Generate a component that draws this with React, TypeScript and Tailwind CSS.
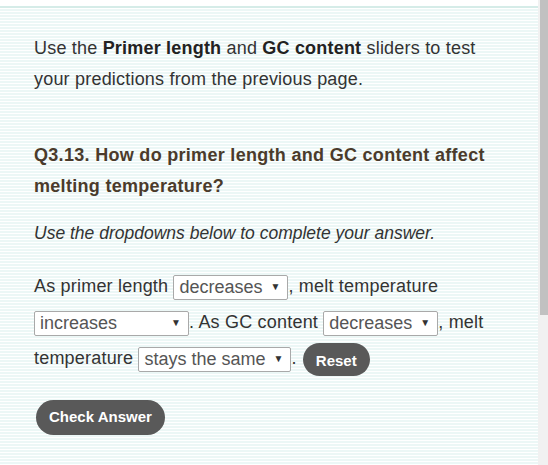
import React from 'react';

// ─── 下拉選單（外觀仿原生 select） ──────────────────────────

interface FakeSelectProps {
    value: string;
    width?: string;
}

const FakeSelect: React.FC<FakeSelectProps> = ({ value, width }) => (
    <span
        className={`inline-flex h-[25px] items-center justify-between gap-[8px] rounded-[2px] border border-[#a9a9a9] bg-white pl-[5px] pr-[7px] align-middle text-[18px] leading-none tracking-normal text-[#555] ${width ?? ''}`}
    >
        <span>{value}</span>
        <span className="text-[10px] text-[#333]">▼</span>
    </span>
);

const PillButton: React.FC<{ label: string; className?: string }> = ({ label, className }) => (
    <button
        type="button"
        className={`rounded-full bg-[#595959] px-[13px] text-[15px] font-bold tracking-normal text-white ${className ?? ''}`}
    >
        {label}
    </button>
);

export default function App() {
    return (
        <div
            className="flex h-[465px] w-[548px] overflow-hidden bg-white text-[#333]"
            style={{ fontFamily: '"Liberation Sans", Arial, sans-serif' }}
        >
            {/* 主要內容 */}
            <div className="flex min-w-0 flex-1 flex-col pt-[6px]">
                <div className="flex-1 border-t-2 border-[#d5ece8] bg-[repeating-linear-gradient(to_bottom,#ffffff_0px,#ffffff_1px,#ecf7f6_1px,#ecf7f6_3px)] pl-[34px] pr-[50px]">
                    <p className="mt-[25px] text-[18px] leading-[31px] tracking-[0.2px]">
                        Use the <b className="text-[#222]">Primer length</b> and{' '}
                        <b className="text-[#222]">GC content</b> sliders to test your predictions from the
                        previous page.
                    </p>

                    <h3 className="mt-[45px] text-[18px] font-bold leading-[31px] tracking-[0.3px] text-[#4a3b2b]">
                        Q3.13. How do primer length and GC content affect melting temperature?
                    </h3>

                    <p className="mt-[16px] text-[17.5px] italic leading-[30px] text-[#333]">
                        Use the dropdowns below to complete your answer.
                    </p>

                    <p className="mt-[20px] text-[18px] leading-[36px] tracking-[0.2px]">
                        As primer length <FakeSelect value="decreases" />, melt temperature{' '}
                        <FakeSelect value="increases" width="w-[155px]" />. As GC content{' '}
                        <FakeSelect value="decreases" />, melt temperature{' '}
                        <FakeSelect value="stays the same" />.{' '}
                        <PillButton label="Reset" className="ml-[1px] h-[33px] align-middle" />
                    </p>

                    <PillButton label="Check Answer" className="mt-[24px] ml-[2px] h-[35px]" />
                </div>
            </div>

            {/* 捲軸 */}
            <div className="w-[10px] shrink-0 bg-[#f1f1f1] pl-[2px]">
                <div className="h-[315px] w-full bg-[#c1c1c1]" />
            </div>
        </div>
    );
}
